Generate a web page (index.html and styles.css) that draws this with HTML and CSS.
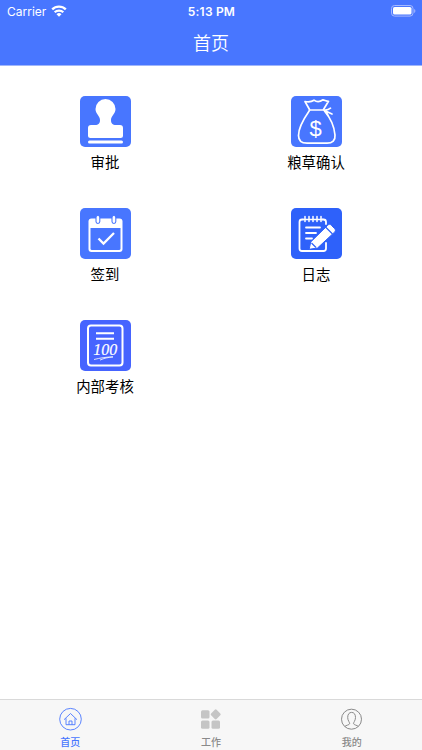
FILE: index.html
```html
<!DOCTYPE html>
<html lang="zh-CN">
<head>
  <meta charset="UTF-8">
  <meta name="viewport" content="width=device-width, initial-scale=1">
  <title>首页</title>
  <link rel="stylesheet" href="styles.css">
</head>
<body>

  <!-- ===== Header ===== -->
  <header>
    <div class="status-bar">
      <div class="carrier">
        <span>Carrier</span>
        <svg width="16" height="12" viewBox="0 0 16 12" fill="none" stroke="#fff" stroke-width="2.3">
          <path d="M1.2 4.400a9.700 9.700 0 0 1 13.600 0M3.700 7.300a6.100 6.100 0 0 1 8.600 0"/>
          <path d="M8 11.800L5.500 9.300a3.600 3.600 0 0 1 5 0z" fill="#fff" stroke="none"/>
        </svg>
      </div>
      <div class="time">5:13 PM</div>
      <div class="battery">
        <svg width="25" height="12" viewBox="0 0 25 12">
          <rect x=".5" y=".5" width="21.500" height="10.600" rx="3" fill="none" stroke="#a5b9ff"/>
          <rect x="2" y="2" width="18.500" height="7.600" rx="1.600" fill="#fff"/>
          <path d="M23.200 4v4c1.600-.7 1.600-3.300 0-4z" fill="#a5b9ff"/>
        </svg>
      </div>
    </div>
    <h1>首页</h1>
  </header>

  <!-- ===== Menu ===== -->
  <main class="menu">
    <a class="item">
      <svg class="icon" viewBox="0 0 51 51">
        <rect width="51" height="51" rx="5" fill="#4876ff"/>
        <path d="M25.500 3a10 10 0 0 1 10 10c0 5-4.500 6.800-4.500 11 0 3.500 1.500 5 5 5h4a3 3 0 0 1 3 3v7.500a2.500 2.500 0 0 1-2.500 2.500h-30A2.500 2.500 0 0 1 8 39.500V32a3 3 0 0 1 3-3h4c3.500 0 5-1.500 5-5 0-4.200-4.500-6-4.500-11a10 10 0 0 1 10-10z" fill="#fff"/>
        <rect x="8" y="44.500" width="35" height="3" rx="1.500" fill="#fff"/>
      </svg>
      <span>审批</span>
    </a>
    <a class="item">
      <svg class="icon" viewBox="0 0 51 51">
        <rect width="51" height="51" rx="5" fill="#4876ff"/>
        <g fill="none" stroke="#fff" stroke-width="1.700" stroke-linecap="round" stroke-linejoin="round">
          <path d="M18.500 13.500L14 5.500c4 .8 6.500.5 9-1.300 3 2.300 6 1.800 9-.4 1.500.2 3.500 1.500 5.500 1.500L32.500 13.500"/>
          <path d="M18.500 14h14.500c3 .3 5-.5 6.500-1.800M33.500 14.500l7.500 3.500M33.500 14.500c2 1.500 3 3 3.500 5"/>
          <path d="M18.500 14.500C14 21 7.500 30 7.500 39.500c0 5 3 7.700 8.500 7.700h20c5.500 0 8.500-3 8-8.200C43.200 30 39.500 22 33.500 15"/>
        </g>
        <text class="dollar" x="24.500" y="39.500" text-anchor="middle">$</text>
      </svg>
      <span>粮草确认</span>
    </a>
    <a class="item">
      <svg class="icon" viewBox="0 0 51 51">
        <rect width="51" height="51" rx="5" fill="#4876ff"/>
        <path d="M11.500 10.500h28a3 3 0 0 1 3 3V41a3 3 0 0 1-3 3h-28a3 3 0 0 1-3-3V13.500a3 3 0 0 1 3-3z" fill="#fff"/>
        <path d="M10.500 20h30v20.500a1.500 1.500 0 0 1-1.500 1.500H12a1.500 1.500 0 0 1-1.500-1.500z" fill="#4876ff"/>
        <g fill="#fff" stroke="#4876ff" stroke-width="1.100">
          <rect x="16" y="7.500" width="3.800" height="8" rx="1.900"/>
          <rect x="32" y="7.500" width="3.800" height="8" rx="1.900"/>
        </g>
        <path d="M18.500 30.500l5 5L34 25" fill="none" stroke="#fff" stroke-width="2.300"/>
      </svg>
      <span>签到</span>
    </a>
    <a class="item">
      <svg class="icon" viewBox="0 0 51 51">
        <rect width="51" height="51" rx="5" fill="#2e61fa"/>
        <g fill="none" stroke="#fff" stroke-width="1.800" stroke-linecap="round">
          <path d="M12 11.500h-1a2.500 2.500 0 0 0-2.500 2.500v26.500A2.500 2.500 0 0 0 11 43h21.500a2.500 2.500 0 0 0 2.500-2.500V35M31.500 11.500h1A2.500 2.500 0 0 1 35 14v2"/>
          <path d="M12 11.500h20M14 8.500v5M18 8.500v5M22 8.500v5M26 8.500v5M30 8.500v5" stroke-width="1.500"/>
          <path d="M15 19.500h14M15 25h10M15 30.500h6"/>
        </g>
        <path d="M18.200 41.300l1.500-7.300L36.500 17.500c1.500-1.600 2.700-1.600 4 0l3 3c1.200 1.300 1.200 2.500 0 3.700L26.500 40z" fill="#fff" stroke="#2e61fa" stroke-width="1"/>
        <path d="M34.500 19l7 7M20.500 35l4.500 4.500" stroke="#2e61fa" stroke-width="1.200"/>
      </svg>
      <span>日志</span>
    </a>
    <a class="item">
      <svg class="icon" viewBox="0 0 51 51">
        <rect width="51" height="51" rx="5" fill="#4664ff"/>
        <rect x="8" y="5.500" width="34.500" height="40" rx="3" fill="none" stroke="#fff" stroke-width="2"/>
        <path d="M16 13.300h18M16 18.800h18" stroke="#fff" stroke-width="2"/>
        <text class="score" x="25.200" y="35" text-anchor="middle" textLength="24">100</text>
        <path d="M14 39.500c6-1.500 12-2.500 19-2.600-5 .5-9 1.300-13 3.200" fill="none" stroke="#fff" stroke-width=".8"/>
      </svg>
      <span>内部考核</span>
    </a>
  </main>

  <!-- ===== Tab Bar ===== -->
  <nav>
    <a class="tab active">
      <svg width="24" height="24" viewBox="0 0 24 24" fill="none" stroke="currentColor" stroke-width=".9">
        <circle cx="12.500" cy="12.200" r="10.800"/>
        <path d="M6 12.700L12.500 6.500l6.500 6.200M8 11.300v6.400h9v-6.400M11 17.700v-3.700h3v3.700"/>
      </svg>
      <span>首页</span>
    </a>
    <a class="tab">
      <svg width="24" height="24" viewBox="0 0 24 24" fill="#c5c5c5">
        <rect x="2" y="3.200" width="8.500" height="8.300" rx="1.500"/>
        <rect x="2" y="13.500" width="8.500" height="8.300" rx="1.500"/>
        <rect x="12.500" y="13.500" width="8.500" height="8.300" rx="1.500"/>
        <rect x="12.800" y="3.500" width="7.800" height="7.800" rx="1.300" transform="rotate(45 16.700 7.400)"/>
      </svg>
      <span>工作</span>
    </a>
    <a class="tab">
      <svg width="24" height="24" viewBox="0 0 24 24" fill="none" stroke="currentColor" stroke-width="1">
        <circle cx="11.500" cy="12.200" r="10"/>
        <path d="M4.800 19.500c1.300-1.500 4.300-1.300 4.800-2.700.4-1.200-1.900-3-1.900-6.300 0-3.300 1.500-5.100 3.900-5.100s3.900 1.800 3.900 5.100c0 3.300-2.300 5.100-1.900 6.300.5 1.400 3.500 1.200 4.800 2.700"/>
      </svg>
      <span>我的</span>
    </a>
  </nav>

</body>
</html>
```

FILE: styles.css
```css
/* ===== Basic Reset & Styles ===== */
* {
  box-sizing: border-box;
}
body {
  margin: 0;
  height: 100vh;
  display: flex;
  flex-direction: column;
  font-family: Inter, "Noto Sans CJK SC", sans-serif;
  background: #fff;
  color: #000;
}
svg {
  display: block;
}

/* ===== Header ===== */
header {
  height: 66px;
  flex-shrink: 0;
  background: #4876ff;
  border-bottom: 1px solid #a0b6fa;
  color: #fff;
}
.status-bar {
  display: grid;
  grid-template-columns: 1fr auto 1fr;
  align-items: center;
  height: 22px;
  padding: 0 6px 0 7px;
  font-size: 12px;
}
.carrier {
  display: flex;
  align-items: center;
  gap: 5px;
}
.carrier svg {
  margin-top: -1px;
}
.time {
  font-weight: 600;
  letter-spacing: 0.2px;
}
.battery {
  justify-self: end;
  margin-top: -1px;
}
h1 {
  margin: 0;
  font-size: 18px;
  line-height: 44px;
  font-weight: 350;
  text-align: center;
}

/* ===== Menu ===== */
.menu {
  flex: 1;
  display: grid;
  grid-template-columns: 1fr 1fr;
  grid-auto-rows: 112px;
  padding-top: 30px;
}
.item {
  display: flex;
  flex-direction: column;
  align-items: center;
  gap: 5px;
  font-size: 14.4px;
  line-height: 21px;
}
.item span {
  margin-right: 1px;
}
.icon {
  width: 51px;
  height: 51px;
}
.dollar {
  font: 22px "Liberation Sans", sans-serif;
  fill: #fff;
}
.score {
  font: italic 16px "Liberation Serif", serif;
  fill: #fff;
  stroke: #fff;
  stroke-width: 0.2px;
}

/* ===== Tab Bar ===== */
nav {
  display: flex;
  flex-shrink: 0;
  height: 51px;
  background: #f7f7f7;
  border-top: 1px solid #d9d9d9;
}
.tab {
  flex: 1;
  display: flex;
  flex-direction: column;
  align-items: center;
  gap: 4px;
  padding-top: 7px;
  font-size: 10px;
  line-height: 15px;
  font-weight: 500;
  color: #8a8a8a;
}
.tab.active {
  color: #4876ff;
}
```
